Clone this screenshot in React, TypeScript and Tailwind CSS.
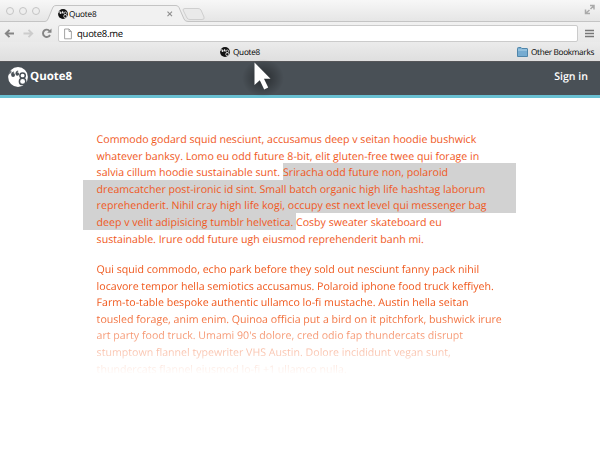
import React from 'react';

function Logo({ className, bg, fg }: { className: string; bg: string; fg: string }) {
  return (
    <svg viewBox="0 0 20 20" className={className}>
      <circle cx="10" cy="10" r="9.9" fill={bg} />
      <path d="M0 5.8L3.2 3.2L3.6 5.6L0.2 8z" fill={fg} opacity=".8" />
      <g fill={fg}>
        <circle cx="5.1" cy="8" r="1.9" />
        <path d="M3.2 8Q3 5.2 5.9 4.4L6.3 5.2Q4.8 5.800 4.700 7z" />
        <circle cx="9.300" cy="7" r="1.800" />
        <path d="M7.500 7Q7.300 4.300 10 3.500L10.400 4.300Q9 4.900 8.900 6z" />
      </g>
      <g fill="none" stroke={fg} strokeWidth="1.500">
        <circle cx="14.600" cy="8.600" r="2.700" />
        <circle cx="14.600" cy="14.400" r="3.200" />
      </g>
    </svg>
  );
}

const second: string[] = [
  'Qui squid commodo, echo park before they sold out nesciunt fanny pack nihil',
  'locavore tempor hella semiotics accusamus. Polaroid iphone food truck keffiyeh.',
  'Farm-to-table bespoke authentic ullamco lo-fi mustache. Austin hella seitan',
  'tousled forage, anim enim. Quinoa officia put a bird on it pitchfork, bushwick irure',
  "art party food truck. Umami 90's dolore, cred odio fap thundercats disrupt",
  'stumptown flannel typewriter VHS Austin. Dolore incididunt vegan sunt,',
  'thundercats flannel eiusmod lo-fi +1 ullamco nulla.',
];

function Line({ children, marked = false }: { children: React.ReactNode; marked?: boolean }) {
  return <div className={`flex h-[16.6px] pl-[13.6px] ${marked ? 'bg-[#d2d2d2]' : ''}`}>{children}</div>;
}

export default function App() {
  return (
    <div className="relative h-[455px] w-[600px] overflow-hidden bg-white font-['Open_Sans',sans-serif] [text-rendering:geometricPrecision]">
      <div className="h-[61px] bg-gradient-to-b from-[#f6f6f6] to-[#dedede]">
        <div className="flex h-[22px] bg-gradient-to-b from-[#f7f7f7] to-[#e5e5e5]">
          <div className="flex w-[47px] gap-[5px] pl-1.5 pt-[7px]">
            <i className="size-2 rounded-full border border-[#c4c4c4] bg-[#eee]" />
            <i className="size-2 rounded-full border border-[#c4c4c4] bg-[#eee]" />
            <i className="size-2 rounded-full border border-[#c4c4c4] bg-[#eee]" />
          </div>
          <div className="relative w-[163px]">
            <svg className="absolute left-[-47px] top-0 h-[23px] w-[600px]" viewBox="0 0 600 23">
              <path d="M-1 21.5H45Q47 21.5 48 19L53 7Q54 5.500 56 5.500H176Q178 5.500 179 7.500L184 19Q185 21.500 188 21.500H601V24H-1z" fill="#f1f1f1" stroke="#c4c4c4" />
              <path d="M185 8.500H198Q200 8.500 201 10L204 17Q205 19.500 202 19.500H190Q188 19.500 187 18L183 10Q183 8.500 185 8.500z" fill="#eaeaea" stroke="#cfcfcf" />
              <path d="M167.500 11.700L172 16.200M172 11.700L167.500 16.200" stroke="#8d8d8d" strokeWidth="1.100" />
              <g fill="none" stroke="#aaa" strokeWidth="1.500">
                <path d="M590 5.500H594V9.500M594 5.500L590.500 9M585.500 9.500V13.500H590M585.500 13.500L589.500 10" />
              </g>
            </svg>
            <div className="relative flex items-center pl-[11px] pt-[7px]">
              <Logo className="size-[10px]" bg="#111" fg="#eee" />
              <span className="pl-[1px] pt-px text-[8.200px] tracking-[-0.18px] leading-[13px] text-[#000]">Quote8</span>
            </div>
          </div>
        </div>
        <div className="relative flex h-[20px] items-center bg-gradient-to-b from-[#f1f1f1] to-[#e9e9e9]">
          <svg className="h-5 w-[58px]" viewBox="0 0 58 20">
            <g fill="none" stroke="#858585" strokeWidth="1.900">
              <path d="M14 11.500H6M9.500 7.800L5.800 11.500L9.500 15.200" />
              <path d="M23.500 11.500H31.500M28.500 7.800L32.200 11.500L28.500 15.200" stroke="#ccc" />
              <path d="M50 13A3.700 3.700 0 1 1 49.600 9" />
            </g>
            <path d="M51.500 6.500V10.800H47.200z" fill="#858585" />
          </svg>
          <div className="mt-[3px] flex h-[17px] w-[520px] items-center rounded-[2px] border border-[#cbcbcb] bg-white pl-[5px]">
            <svg className="h-3 w-2" viewBox="0 0 8 12"><path d="M.6 1H5L7.400 3.500V10.800H.6zM5 1V3.500H7.400" fill="#fff" stroke="#999" strokeWidth=".9" /></svg>
            <span className="pl-[5px] text-[9.500px] leading-[14px] tracking-[-0.25px] text-[#000]">quote8.me</span>
          </div>
          <svg className="ml-[7px] h-5 w-[9px]" viewBox="0 0 9 20"><path d="M0 8.500H9M0 11.500H9M0 14.500H9" stroke="#777" strokeWidth="1.500" /></svg>
        </div>
        <div className="flex h-[19px] items-center justify-between bg-gradient-to-b from-[#ebebeb] to-[#dfdfdf] pl-[220px] pr-[6px] pt-px">
          <div className="flex items-center gap-[3px]">
            <Logo className="size-[10px]" bg="#111" fg="#eee" />
            <span className="pt-[2px] text-[8.200px] tracking-[-0.25px] text-[#000]">Quote8</span>
          </div>
          <div className="flex items-center gap-[3px]">
            <svg className="h-[10px] w-[11px]" viewBox="0 0 11 10"><path d="M.5 9.500V1.500Q.5 .5 1.500 .5H4L5 1.500H10Q10.500 1.500 10.500 2V9.500z" fill="#77acd1" stroke="#5086aa" /><path d="M1 3H10" stroke="#b1d5ea" /></svg>
            <span className="pt-[2px] text-[8.200px] tracking-[-0.3px] text-[#000]">Other Bookmarks</span>
          </div>
        </div>
      </div>
      <header className="relative flex h-[37px] items-center justify-between border-b-[3px] border-t border-b-[#69c0d2] border-t-[#555659] bg-[#495056] pl-2 pr-3 text-white">
        <div className="flex items-center pb-[3px]">
          <Logo className="size-5" bg="#fff" fg="#495056" />
          <span className="pl-[2px] text-[11.500px] font-bold leading-4">Quote8</span>
        </div>
        <span className="pb-[4px] text-[10.600px] font-semibold leading-4">Sign in</span>
        <svg className="absolute left-[234px] top-[-8px] h-11 w-[60px]" viewBox="0 0 60 44">
          <defs>
            <radialGradient id="cursorShade"><stop offset="0" stopColor="#000" stopOpacity=".45" /><stop offset="1" stopColor="#000" stopOpacity="0" /></radialGradient>
          </defs>
          <ellipse cx="29" cy="24" rx="21" ry="19" fill="url(#cursorShade)" />
          <path d="M20.500 8.500V31L25.800 26.300L30.200 35.500L34.200 33.600L30 24.800H36.500z" fill="#fff" />
        </svg>
      </header>
      <main className="ml-[83px] w-[433px] whitespace-nowrap pt-[32px] text-[10.620px] leading-[20.800px] text-[#f0581c]">
        <section className="h-[130px]">
          <Line>Commodo godard squid nesciunt, accusamus deep v seitan hoodie bushwick</Line>
          <Line>whatever banksy. Lomo eu odd future 8-bit, elit gluten-free twee qui forage in</Line>
          <Line><span className="w-[186.400px]">salvia cillum hoodie sustainable sunt.</span><span className="flex-1 bg-[#d2d2d2]">Sriracha odd future non, polaroid</span></Line>
          <Line marked>dreamcatcher post-ironic id sint. Small batch organic high life hashtag laborum</Line>
          <Line marked>reprehenderit. Nihil cray high life kogi, occupy est next level qui messenger bag</Line>
          <div className="flex h-[16.600px]"><span className="w-[213px] bg-[#d2d2d2] pl-[13.600px]">deep v velit adipisicing tumblr helvetica.</span><span>Cosby sweater skateboard eu</span></div>
          <Line>sustainable. Irure odd future ugh eiusmod reprehenderit banh mi.</Line>
        </section>
        <section className="[mask-image:linear-gradient(to_bottom,black_42%,transparent_99%)]">
          {second.map((line) => <Line key={line}>{line}</Line>)}
        </section>
      </main>
    </div>
  );
}
